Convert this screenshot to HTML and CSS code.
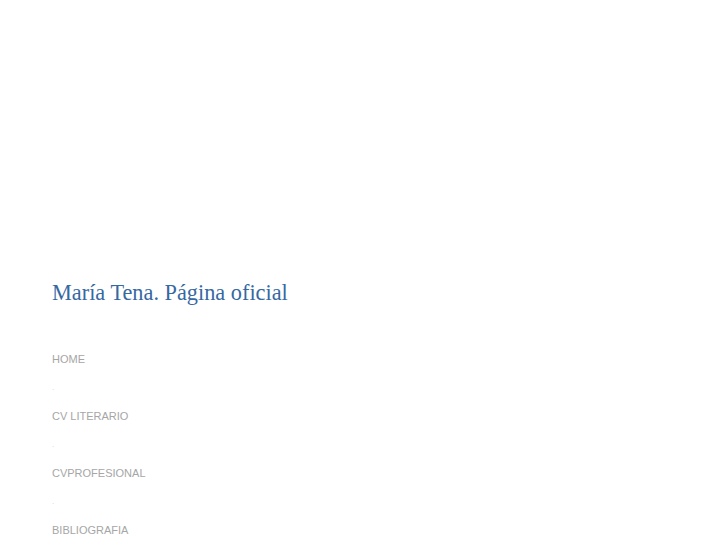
FILE: index.html
```html
<!DOCTYPE html>
<html lang="es">
<head>
<meta charset="utf-8">
<title>María Tena. Página oficial</title>
<link rel="stylesheet" href="styles.css">
</head>
<body>
<div class="page">
  <h1 class="site-title">María Tena. Página oficial</h1>
  <ul class="nav">
    <li class="nav-item"><a href="#">HOME</a></li>
    <li class="nav-sep">.</li>
    <li class="nav-item"><a href="#">CV LITERARIO</a></li>
    <li class="nav-sep">.</li>
    <li class="nav-item"><a href="#">CVPROFESIONAL</a></li>
    <li class="nav-sep">.</li>
    <li class="nav-item"><a href="#">BIBLIOGRAFIA</a></li>
  </ul>
</div>
</body>
</html>
```
FILE: styles.css
```css
html, body {
  margin: 0;
  padding: 0;
  background: #ffffff;
}
.page {
  padding: 279px 0 0 52px;
}
.site-title {
  margin: 0;
  font-family: "Liberation Serif", "Times New Roman", serif;
  font-weight: normal;
  font-size: 22.3px;
  line-height: 28px;
  color: #3668a2;
}
.nav {
  list-style: none;
  margin: 45px 0 0 0;
  padding: 0;
  font-family: "Liberation Sans", Arial, sans-serif;
  font-size: 11px;
}
.nav-item {
  height: 28.5px;
  line-height: 14px;
}
.nav-item a {
  color: #a6a6a6;
  text-decoration: none;
}
.nav-sep {
  height: 28.5px;
  line-height: 14px;
  color: #d0d0d0;
  font-size: 8px;
}
```
